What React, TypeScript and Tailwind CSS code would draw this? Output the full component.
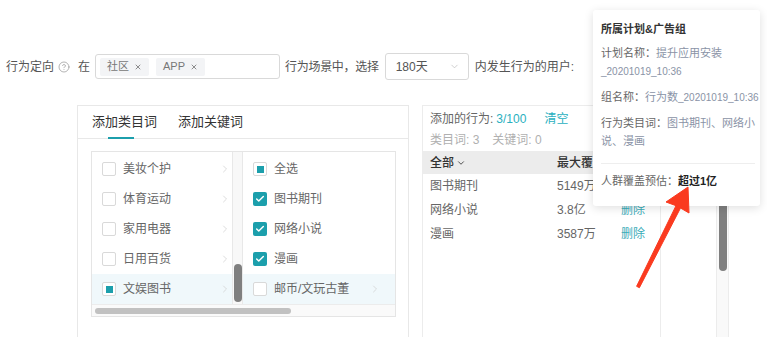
import { Check, ChevronDown, ChevronRight, CircleHelp, X } from "lucide-react";

type BoxState = "off" | "on" | "part";

const LEFT_ROWS: Array<{ label: string; state: BoxState; active?: boolean }> = [
  { label: "美妆个护", state: "off" },
  { label: "体育运动", state: "off" },
  { label: "家用电器", state: "off" },
  { label: "日用百货", state: "off" },
  { label: "文娱图书", state: "part", active: true },
];

const RIGHT_ROWS: Array<{ label: string; state: BoxState; active?: boolean; more?: boolean }> = [
  { label: "全选", state: "part" },
  { label: "图书期刊", state: "on" },
  { label: "网络小说", state: "on" },
  { label: "漫画", state: "on" },
  { label: "邮币/文玩古董", state: "off", active: true, more: true },
];

const ADDED = [
  { name: "图书期刊", reach: "5149万" },
  { name: "网络小说", reach: "3.8亿" },
  { name: "漫画", reach: "3587万" },
];

function Box({ state }: { state: BoxState }) {
  if (state === "on") {
    return (
      <span className="w-[14px] h-[14px] shrink-0 rounded-[2px] bg-[#1c9fac] flex items-center justify-center">
        <Check size={10} color="#fff" strokeWidth={3.5} />
      </span>
    );
  }
  return (
    <span className="w-[14px] h-[14px] shrink-0 rounded-[2px] border border-[#d9d9d9] bg-white flex items-center justify-center">
      {state === "part" && <span className="w-[7px] h-[7px] bg-[#1c9fac]" />}
    </span>
  );
}

function Tag({ text }: { text: string }) {
  return (
    <span className="h-[18px] px-[7px] mr-[7px] rounded-[2px] bg-[#f3f4f6] text-[11px] text-[#777] flex items-center gap-[5px]">
      {text}
      <X size={8} color="#777" strokeWidth={2.5} />
    </span>
  );
}

function Row({ label, value }: { label: string; value: React.ReactNode }) {
  return (
    <div className="leading-[18px]">
      <span className="text-[#666]">{label}</span>
      <span className="text-[#8a93a6]">{value}</span>
    </div>
  );
}

export default function App() {
  return (
    <div className="relative w-[767px] h-[337px] overflow-hidden bg-white text-[12px] text-[#555] font-[family-name:'Liberation_Sans','Noto_Sans_CJK_SC',sans-serif]">
      {/* filter line */}
      <div className="pt-[53px] pl-[6px] h-[80px] flex items-center">
        <span>行为定向</span>
        <span className="ml-[4px] flex items-center">
          <CircleHelp size={12} color="#999" strokeWidth={1.5} />
        </span>
        <span className="ml-[8px]">在</span>
        <div className="ml-[5px] w-[185px] h-[25px] border border-[#d9d9d9] rounded-[3px] flex items-center pl-[4px]">
          <Tag text="社区" />
          <Tag text="APP" />
        </div>
        <span className="ml-[5px] tracking-[-0.3px]">行为场景中，选择</span>
        <div className="ml-[6px] w-[84px] h-[27px] border border-[#d9d9d9] rounded-[3px] flex items-center justify-between pl-[10px] pr-[8px] text-[#555]">
          <span>180天</span>
          <ChevronDown size={11} color="#bbb" strokeWidth={1.5} />
        </div>
        <span className="ml-[6px]">内发生行为的用户:</span>
      </div>

      {/* panels */}
      <div className="mt-[25px] pl-[77px] flex">
        {/* picker */}
        <div className="w-[332px] h-[240px] border-l border-t border-r border-[#e8e8e8]">
          <div className="h-[33px] border-b border-[#e8e8e8] flex items-center pl-[14px] text-[13px] text-[#333]">
            <div className="relative h-full flex items-center">
              添加类目词
              <span className="absolute bottom-[-1px] left-[16px] w-[26px] h-[2px] bg-[#1c9fac]" />
            </div>
            <div className="ml-[21px] h-full flex items-center">添加关键词</div>
          </div>

          <div className="mt-[12px] ml-[13px] w-[305px] border border-[#e5e5e5]">
            <div className="flex h-[152px]">
              <div className="w-[140px] pt-[2px] flex flex-col">
                {LEFT_ROWS.map(r => (
                  <div key={r.label} className={`h-[30px] flex items-center pl-[10px] pr-[1px] ${r.active ? "bg-[#f0f8fb]" : ""}`}>
                    <Box state={r.state} />
                    <span className="ml-[7px] flex-1 text-[#666]">{r.label}</span>
                    <ChevronRight size={12} color="#d0d0d0" strokeWidth={1.5} />
                  </div>
                ))}
              </div>
              <div className="w-[11px] border-l border-r border-[#e8e8e8] bg-[#f8f8f8] flex flex-col justify-end items-center pb-[2px]">
                <div className="w-[8px] h-[38px] rounded-full bg-[#7f7f7f]" />
              </div>
              <div className="flex-1 pt-[2px] flex flex-col">
                {RIGHT_ROWS.map(r => (
                  <div key={r.label} className={`h-[30px] flex items-center pl-[10px] pr-[14px] ${r.active ? "bg-[#f0f8fb]" : ""}`}>
                    <Box state={r.state} />
                    <span className="ml-[7px] flex-1 text-[#666]">{r.label}</span>
                    {r.more && <ChevronRight size={12} color="#d0d0d0" strokeWidth={1.5} />}
                  </div>
                ))}
              </div>
            </div>
            <div className="h-[12px] border-t border-[#ececec] bg-[#fafafa] flex items-center pl-[3px]">
              <div className="w-[196px] h-[6px] rounded-full bg-[#c1c1c1]" />
            </div>
          </div>
        </div>

        {/* added list */}
        <div className="ml-[13px] w-[239px] h-[240px] border-l border-t border-r border-[#ececec]">
          <div className="pt-[3px] pl-[7px] leading-[20px] flex">
            <span className="text-[#666]">添加的行为: </span>
            <span className="ml-[3px] text-[#2ab0c0]">3/100</span>
            <span className="ml-[18px] text-[#2ab0c0]">清空</span>
          </div>
          <div className="pl-[7px] leading-[22px] text-[#b0b0b0] flex">
            <span>类目词: 3</span>
            <span className="ml-[13px]">关键词: 0</span>
          </div>
          <div className="h-[23px] bg-[#ececec] flex items-center pl-[7px] text-[#333] font-medium">
            <span className="w-[127px] flex items-center gap-[2px]">
              全部
              <ChevronDown size={10} color="#333" strokeWidth={2} />
            </span>
            <span>最大覆盖</span>
          </div>
          {ADDED.map(a => (
            <div key={a.name} className="h-[24px] flex items-center pl-[7px] text-[#666]">
              <span className="w-[127px]">{a.name}</span>
              <span className="w-[64px]">{a.reach}</span>
              <span className="text-[#3aabb8]">删除</span>
            </div>
          ))}
        </div>

        <div className="w-[55px]" />
        <div className="w-[13px] h-[240px] border-l border-r border-[#ececec] bg-[#f9f9f9] pt-[45px] flex flex-col items-center">
          <div className="w-[8px] h-[121px] rounded-full bg-[#7f7f7f]" />
        </div>
      </div>

      {/* popover */}
      <div className="absolute left-[593px] top-[10px] w-[167px] h-[196px] bg-white rounded-[3px] shadow-[0_2px_10px_rgba(0,0,0,0.13)] pl-[8px] pr-[5px] pt-[10px] text-[11px]">
        <div className="leading-[18px] font-bold text-[#333]">所属计划&amp;广告组</div>
        <div className="mt-[6px]">
          <Row label="计划名称：" value={<>提升应用安装<span className="text-[10px]">_20201019_10:36</span></>} />
        </div>
        <div className="mt-[7px] whitespace-nowrap">
          <Row label="组名称：" value={<>行为数<span className="text-[10px]">_20201019_10:36</span></>} />
        </div>
        <div className="mt-[7px]">
          <Row label="行为类目词：" value="图书期刊、网络小说、漫画" />
        </div>
        <div className="mt-[13px] h-px bg-[#eeeeee]" />
        <div className="mt-[8px] leading-[18px]">
          <span className="text-[#666]">人群覆盖预估：</span>
          <span className="font-bold text-[#222]">超过1亿</span>
        </div>
      </div>

      {/* annotation arrow */}
      <svg className="absolute left-0 top-0 pointer-events-none" width="767" height="337" viewBox="0 0 767 337">
        <polygon
          points="688,187 689,213 680.5,208 639.4,287.7 636.6,286.3 676,205.7 666,202"
          fill="#fa3a1f"
          stroke="#fa3a1f"
          strokeWidth="1"
          strokeLinejoin="round"
        />
      </svg>
    </div>
  );
}
